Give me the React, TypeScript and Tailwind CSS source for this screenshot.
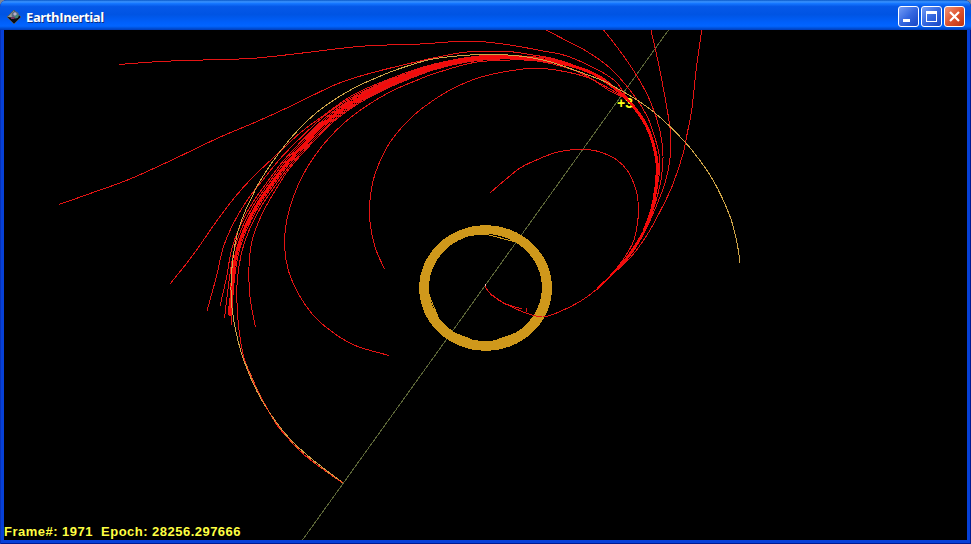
import React from "react";

type Point = [number, number];

// Smooth curve through every sample of a trajectory.
function curve(points: Point[]): string {
  let d = `M${points[0][0]} ${points[0][1]}`;
  for (let i = 0; i < points.length - 1; i++) {
    const a = points[Math.max(i - 1, 0)];
    const b = points[i];
    const c = points[i + 1];
    const e = points[Math.min(i + 2, points.length - 1)];
    d += `C${b[0] + (c[0] - a[0]) / 6} ${b[1] + (c[1] - a[1]) / 6} ${c[0] - (e[0] - b[0]) / 6} ${c[1] - (e[1] - b[1]) / 6} ${c[0]} ${c[1]}`;
  }
  return d;
}

const departure: Point[] = [
  [485, 286], [489, 292], [500, 301], [512, 307], [526, 313], [543, 317], [560, 311.5],
  [580, 301.5], [597, 289], [610, 276.5],
];

const rise: Point[] = [
  [625, 260], [635, 246], [644, 231], [651.5, 211], [656, 187], [657, 163],
  [653, 143], [646.5, 126], [637, 111], [628, 100],
];

// Mean path of the bundle, from the crossing point down the left side.
const spine: Point[] = [
  [617, 90], [594, 74], [567, 64.5], [533, 58.5], [500, 57], [467, 59.5], [433, 67], [400, 79],
  [375, 90], [353, 102], [330, 118.5], [310, 138], [287, 163], [270, 186], [257, 205], [245, 228],
  [237, 251], [232.5, 278],
];

// Displaces the spine outward, by nothing at its top and by the given amounts
// at its middle and its end.
function beside(middle: number, end: number): Point[] {
  const last = spine.length - 1;
  return spine.map(([x, y], i) => {
    const before = spine[Math.max(i - 1, 0)];
    const after = spine[Math.min(i + 1, last)];
    const dx = after[0] - before[0];
    const dy = after[1] - before[1];
    const length = Math.hypot(dx, dy);
    const t = i / last;
    const amount = middle * 4 * t * (1 - t) + end * 2 * t * (t - 0.5);
    return [x - (dy / length) * amount, y + (dx / length) * amount];
  });
}

const trajectories: Point[][] = [
  // closed inner loop
  [...departure, [620, 264], [628, 252], [634, 240], [637.5, 223], [638.5, 208], [636, 190], [628, 171.5],
    [617, 160], [602, 152.5], [587, 149.5], [575, 149.5], [560, 151.5], [551, 154], [533, 161.5], [520, 168], [505, 180], [490, 193]],
  // escapes through the top edge
  [...departure, [630, 258], [647, 235], [660, 211.5], [672, 186.5], [683, 154], [687.5, 132], [692, 108], [696, 71], [702, 28]],
  [...departure, [629, 257], [643.5, 234], [655, 209], [665, 183], [670, 158], [670, 128], [660, 71], [650.5, 28]],
  [...departure, [627, 259], [645, 230], [655, 204], [661, 180], [663, 156], [660, 131], [651, 103], [637, 76], [620, 51], [602, 28]],
  [...departure, [626, 260], [644, 230], [654, 202], [659, 176], [659.5, 157], [655, 138], [647, 116], [633, 94], [610, 68], [587, 51.5], [573, 44], [544, 29]],
  // wide arcs to the left
  [...departure, ...rise, [617, 83], [600, 71], [567, 56], [543, 51], [513, 45.5], [480, 41.5], [457, 41.5], [420, 44], [387, 45], [353, 47], [290, 54.5], [250, 58.5], [203, 60], [160, 61.5], [119, 64.5]],
  [...departure, ...rise, [600, 76.5], [560, 60.5], [533, 55], [507, 51.5], [467, 52], [433, 58], [420, 61], [373, 72.5], [337, 84], [290, 106.5], [257, 121.5], [217, 138.5], [173, 159.5], [130, 179], [93, 192.5], [59, 204.5]],
  [...departure, ...rise, [600, 76], [560, 61], [530, 56.5], [486, 55.5], [450, 60.5], [420, 68], [387, 80], [353, 95], [320, 118], [300, 133], [280, 151.5], [253, 177], [235, 197], [216, 222], [193, 255], [170, 284]],
  // bundle of near-identical transfers
  [...departure, ...rise, ...beside(4, 16), [207, 311]],
  [...departure, ...rise, ...beside(3, 6), [220, 306]],
  [...departure, ...rise, ...beside(2, 3), [224.5, 318]],
  [...departure, ...rise, ...beside(-1, 0), [228, 315]],
  [...departure, ...rise, ...beside(-2, -2), [231, 325]],
  // transfer that reaches the target orbit
  [...departure, ...rise, ...beside(-3, -5), [237, 303], [239, 330], [244, 358],
    [255, 385], [275, 422], [287, 437], [302, 453], [320, 467], [343, 483]],
  [...departure, ...rise, ...beside(-4, -7).slice(0, 13), [278, 186], [262, 214], [252, 241], [249, 267], [250, 297], [255.5, 327]],
  // short arcs turning back below
  [...departure, ...rise, [600, 83.5], [573, 70], [533, 60.5], [487, 61], [467, 64], [433, 74], [420, 79], [387, 93.5], [350, 118], [323, 145], [303, 175], [290, 207], [285, 233], [286, 260], [293, 283], [309, 310], [327, 328], [354, 345], [389, 355.5]],
  [...departure, ...rise, [610, 91], [590, 78.5], [567, 72], [543, 68.5], [523, 69], [483, 76.5], [450, 90], [420, 110], [403, 126], [387, 147], [375, 174], [370, 200], [370, 222], [375, 247], [384.5, 269]],
];

const orbit: Point[] = [
  [740, 263], [737, 243], [730, 216.5], [713, 180], [693, 151.5], [673, 129.5], [655, 113], [637, 100], [613, 86], [600, 79.5], [560, 65],
  [547, 61], [527, 57], [500, 54.5], [477, 54.5], [433, 59], [400, 68.5], [383, 75], [353, 88.5], [323, 107.5],
  [300, 128], [280, 151.5], [260, 181], [251, 199], [244, 214], [237, 235], [232.5, 262], [231, 287], [232, 308], [236, 332],
  [244, 361], [260, 397], [283, 431], [307, 455], [343, 483],
];

function TrajectoryView() {
  return (
    <svg className="block h-[510px] w-[963px]" viewBox="4 30 963 510" shapeRendering="crispEdges" fill="none">
      <path d="M668.5 30L302.5 540" stroke="#5c6638" />
      <path
        d="M419.2 288a66.4 62.7 0 1 0 132.8 0a66.4 62.7 0 1 0-132.8 0ZM429 287.5a56.4 53.5 0 1 0 112.8 0a56.4 53.5 0 1 0-112.8 0Z"
        fill="#cf981b"
        fillRule="evenodd"
      />
      <path
        d="M464 236L485 234L516 242L530 252L537 263M434 253L428 274L429 295L439 319L452 332L470 339M438 249L430 267M429 304L440 321M494 341L519 332M535 316L541 301"
        stroke="#cf981b"
      />
      {trajectories.map((points, i) => (
        <path key={i} d={curve(points)} stroke="#e51414" />
      ))}
      <path d={curve([[597, 289], [610, 276.5], ...rise.slice(0, 3)])} stroke="#f50a0a" strokeWidth="2" />
      <path d={curve([...rise.slice(2), ...spine.slice(0, 1)])} stroke="#f50a0a" strokeWidth="3" />
      <path d={curve([...spine, [230, 316]])} stroke="#f50a0a" strokeWidth="3" />
      <path d={curve(orbit)} stroke="#d0a548" />
      <path d="M343 483C323 470 303 455 287 437S260 397 246 364" stroke="#ee5523" strokeDasharray="5 3" />
      <path d="M490 294L505 304L522 309M526 308L527 312" stroke="#e51414" />
      <path d="M485 284v2" stroke="#ffc0b8" />
      <text x="617" y="108" fill="#ffff18" className="font-['Liberation_Sans',Arial,sans-serif] text-[14px] font-bold">
        +3
      </text>
      <path d="M622 93L633 106" stroke="#f50a0a" strokeWidth="2" />
    </svg>
  );
}

function AppIcon() {
  return (
    <svg className="h-4 w-4" viewBox="0 0 16 16">
      <path d="M1 8L8 1l7 7-7 7Z" fill="#0b0d12" stroke="#56616c" strokeWidth="0.7" />
      <path d="M1.5 8L8 1.5l1 2-3 5Z" fill="#9a9d95" />
      <circle cx="9.2" cy="6" r="3.6" fill="#596b7e" />
      <path d="M7 5l2-2 2 2-2 2Z" fill="#b5b0cc" />
      <path d="M5 8h4l-1 2H5Z" fill="#76345e" />
      <path d="M10 6h3l-2 3H9Z" fill="#3d8b71" />
    </svg>
  );
}

function CaptionButton({ label, close, children }: { label: string; close?: boolean; children: React.ReactNode }) {
  return (
    <button
      aria-label={label}
      className={`h-[21px] w-[21px] rounded-[3px] border border-white bg-linear-to-br ${
        close ? "from-[#ee9275] via-[#df532d] to-[#bd3210]" : "from-[#749cf5] via-[#3467e0] to-[#1745c5]"
      }`}
    >
      <svg className="block h-[19px] w-[19px]" viewBox="0 0 19 19" fill="none" stroke="white" shapeRendering="crispEdges">
        {children}
      </svg>
    </button>
  );
}

export default function App() {
  return (
    <div className="h-[544px] w-[971px] overflow-hidden bg-[#7c8596]">
      <div className="flex h-full flex-col overflow-hidden rounded-t-[7px] bg-[#0640d8] shadow-[inset_1px_0_#0831b5,inset_-1px_0_#001b92,inset_0_-1px_#001b92]">
        <header className="flex h-[30px] shrink-0 items-center bg-[linear-gradient(180deg,#0958c8_0%,#3a93ff_6%,#1475ff_12%,#0558e8_22%,#0054e3_48%,#0060fb_75%,#0265ff_87%,#0050d8_94%,#003dbb_100%)] pt-[3px] pr-[6px] pl-[6px]">
          <AppIcon />
          <h1 className="ml-1 grow pt-px font-['Open_Sans','Noto_Sans',sans-serif] text-[13px] leading-4 font-bold tracking-[-0.4px] text-white [text-shadow:1px_1px_#0b2f87]">
            EarthInertial
          </h1>
          <div className="flex gap-[2px]">
            <CaptionButton label="Minimize">
              <path d="M4 13.5h7" strokeWidth="3" />
            </CaptionButton>
            <CaptionButton label="Maximize">
              <path d="M4.5 5v9.5h10V5" />
              <path d="M4 5.5h11" strokeWidth="3" />
            </CaptionButton>
            <CaptionButton label="Close" close>
              <path d="M5 5l9 9M14 5l-9 9" strokeWidth="2.2" shapeRendering="auto" />
            </CaptionButton>
          </div>
        </header>
        <main className="relative mx-1 h-[510px] bg-black">
          <TrajectoryView />
          <p className="absolute bottom-[-1px] left-0 font-['Liberation_Sans',Arial,sans-serif] text-[13px] leading-[18px] font-bold tracking-[0.48px] whitespace-pre text-[#ffff42]">
            {"Frame#: 1971  Epoch: 28256.297666"}
          </p>
        </main>
      </div>
    </div>
  );
}
